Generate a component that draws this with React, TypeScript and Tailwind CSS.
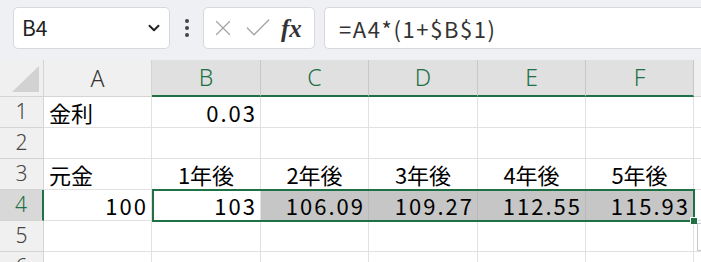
import { ChevronDown, X, Check } from "lucide-react";

const cols = [
  { key: "A", w: 108 },
  { key: "B", w: 109 },
  { key: "C", w: 108 },
  { key: "D", w: 109 },
  { key: "E", w: 108 },
  { key: "F", w: 108 },
];

type Cell = { v: string; align?: "left" | "right" | "center" };

const empty = (): Cell[] => Array.from({ length: 6 }, () => ({ v: "" }));

const rows: { n: number; cells: Cell[] }[] = [
  { n: 1, cells: [{ v: "金利" }, { v: "0.03", align: "right" }, { v: "" }, { v: "" }, { v: "" }, { v: "" }] },
  { n: 2, cells: empty() },
  {
    n: 3,
    cells: [
      { v: "元金" },
      { v: "1年後", align: "center" },
      { v: "2年後", align: "center" },
      { v: "3年後", align: "center" },
      { v: "4年後", align: "center" },
      { v: "5年後", align: "center" },
    ],
  },
  {
    n: 4,
    cells: [
      { v: "100", align: "right" },
      { v: "103", align: "right" },
      { v: "106.09", align: "right" },
      { v: "109.27", align: "right" },
      { v: "112.55", align: "right" },
      { v: "115.93", align: "right" },
    ],
  },
  { n: 5, cells: empty() },
  { n: 6, cells: empty() },
];

const Toolbar = () => (
  <div className="flex h-[60px] items-start bg-[#eef0f3] pt-[7px] pl-[13px]">
    <div className="flex h-[42px] w-[157px] items-center justify-between rounded-[5px] border border-[#d6d8db] bg-white pl-[8px] pr-[6px]">
      <span className="text-[21px] text-[#222]">B4</span>
      <ChevronDown size={18} strokeWidth={2.6} color="#222" />
    </div>
    <div className="flex h-[42px] w-[33px] flex-col items-center justify-center gap-[3px]">
      <span className="h-[4px] w-[4px] rounded-full bg-[#444]" />
      <span className="h-[4px] w-[4px] rounded-full bg-[#444]" />
      <span className="h-[4px] w-[4px] rounded-full bg-[#444]" />
    </div>
    <div className="flex h-[42px] w-[112px] items-center rounded-[5px] border border-[#d6d8db] bg-white pl-[6px]">
      <X size={26} strokeWidth={1.2} color="#a6a6a6" />
      <Check size={32} strokeWidth={1.05} color="#a6a6a6" className="ml-[6px]" />
      <span className="ml-[7px] font-['Liberation_Serif',serif] text-[25px] font-bold italic leading-none text-[#333]">fx</span>
    </div>
    <div className="ml-[9px] flex h-[42px] flex-1 items-center rounded-l-[5px] border border-r-0 border-[#d6d8db] bg-white pl-[14px]">
      <span className="text-[22px] tracking-[1.6px] text-[#333]">=A4*(1+$B$1)</span>
    </div>
  </div>
);

const HeaderRow = () => (
  <div className="flex h-[37px]">
    <div className="relative w-[44px] shrink-0 border-r border-b border-[#d4d4d4] bg-[#f0f0f0]">
      <svg width="44" height="36" className="absolute left-0 top-0">
        <polygon points="12,32 39,6 39,32" fill="#d2d2d2" />
      </svg>
    </div>
    {cols.map((c) => {
      const sel = c.key !== "A";
      return (
        <div
          key={c.key}
          style={{ width: c.w }}
          className={
            sel
              ? "flex shrink-0 items-center justify-center border-r border-b-2 border-r-[#c8c8c8] border-b-[#1e7145] bg-[#e0e0e0] font-['Noto_Sans',sans-serif] text-[23px] font-light text-[#1e7145]"
              : "flex shrink-0 items-center justify-center border-r border-b border-[#d4d4d4] bg-[#f0f0f0] font-['Noto_Sans',sans-serif] text-[23px] font-light text-[#333]"
          }
        >
          {c.key}
        </div>
      );
    })}
    <div className="flex-1 border-b border-[#d4d4d4] bg-[#f0f0f0]" />
  </div>
);

const alignClass = (c: Cell) => {
  if (c.align === "right") return "justify-end pl-[5px] pr-[3px] tracking-[2px] ";
  if (c.align === "center") return "justify-center px-[5px] ";
  return "justify-start px-[5px] ";
};

export default function App() {
  return (
    <div className="h-[262px] w-[701px] overflow-hidden bg-white font-['Noto_Sans_CJK_JP',sans-serif]">
      <Toolbar />
      <HeaderRow />
      <div className="relative">
        {rows.map((r) => {
          const selRow = r.n === 4;
          return (
            <div key={r.n} className="flex h-[31px]">
              <div
                className={
                  selRow
                    ? "flex w-[44px] shrink-0 items-center justify-center border-r-2 border-b border-r-[#1e7145] border-b-[#d4d4d4] bg-[#d8d8d8] font-['Noto_Sans',sans-serif] text-[21px] font-light text-[#1e7145]"
                    : "flex w-[44px] shrink-0 items-center justify-center border-r border-b border-[#d4d4d4] bg-[#f0f0f0] font-['Noto_Sans',sans-serif] text-[21px] font-light text-[#444]"
                }
              >
                {r.n}
              </div>
              {r.cells.map((c, i) => {
                const shaded = selRow && i >= 2;
                return (
                  <div
                    key={i}
                    style={{ width: cols[i].w }}
                    className={
                      (shaded ? "border-[#b8b8b8] bg-[#c6c6c6] " : "border-[#e1e1e1] bg-white ") +
                      alignClass(c) +
                      "flex shrink-0 items-center overflow-hidden whitespace-nowrap border-r border-b text-[22px] leading-none text-black"
                    }
                  >
                    {c.v}
                  </div>
                );
              })}
              <div className="flex-1 border-b border-[#e1e1e1]" />
            </div>
          );
        })}
        {/* selection B4:F4 */}
        <div className="pointer-events-none absolute left-[152px] top-[92px] h-[33px] w-[543px] border-2 border-[#1e7145]" />
        <div className="absolute left-[690px] top-[120px] h-[8px] w-[8px] border border-white bg-[#1e7145]" />
        <div className="absolute left-[697px] top-[126px] h-[28px] w-[10px] border border-[#c8c8c8] bg-white" />
      </div>
    </div>
  );
}
